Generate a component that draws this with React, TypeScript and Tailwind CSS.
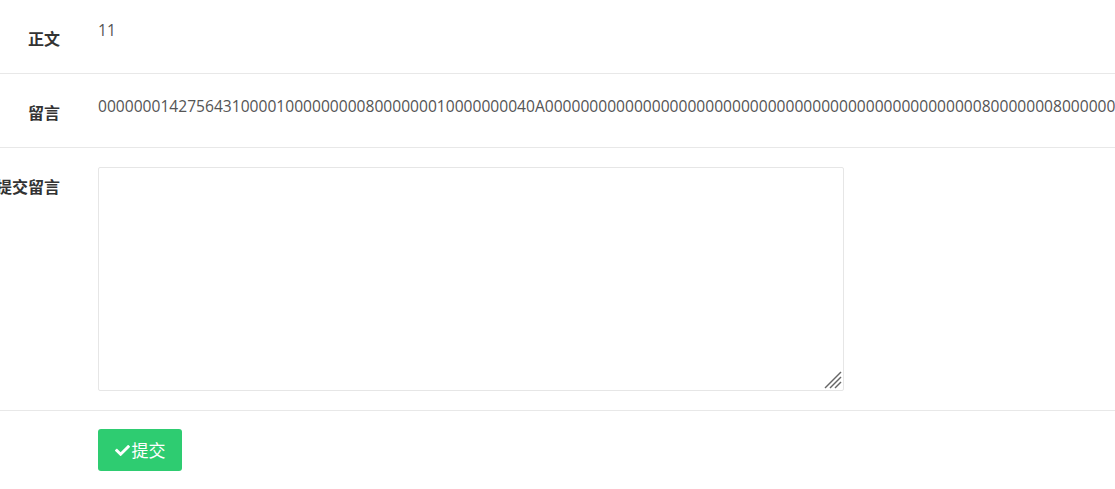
import React from "react";
import { FaCheck } from "react-icons/fa";

const LONG =
  "0000000142756431000010000000008000000010000000040A" +
  "0".repeat(49) +
  "800000008" +
  "0".repeat(40);

function Label({ children }: { children: React.ReactNode }) {
  return (
    <div className="w-[60px] shrink-0 flex justify-end pt-[27px] whitespace-nowrap text-[16px] leading-[22px] font-bold text-[#333] font-['Noto_Sans_CJK_SC',sans-serif]">
      <span>{children}</span>
    </div>
  );
}

export default function App() {
  return (
    <div className="w-[1115px] h-[489px] overflow-hidden bg-white font-['Open_Sans','Noto_Sans_CJK_SC',sans-serif] text-[#555]">
      <div className="flex h-[74px] border-b border-[#e8e8e8]">
        <Label>正文</Label>
        <div className="ml-[38px] pt-[19px] text-[15.6px] leading-[22px]">11</div>
      </div>
      <div className="flex h-[74px] border-b border-[#e8e8e8]">
        <Label>留言</Label>
        <div className="ml-[38px] pt-[21px] text-[15.6px] leading-[22px] whitespace-nowrap">
          {LONG}
        </div>
      </div>
      <div className="flex h-[263px] border-b border-[#e8e8e8]">
        <Label>提交留言</Label>
        <div className="ml-[38px] pt-[19px]">
          <div className="relative w-[746px] h-[224px]">
            <textarea className="block w-full h-full resize-none border border-[#e6e6e6] rounded-[2px] outline-none p-2 text-[14px]" />
            <svg
              className="absolute right-[2px] bottom-[2px] pointer-events-none"
              width="18"
              height="18"
              viewBox="0 0 18 18"
            >
              <g stroke="#666" strokeWidth="1.4">
                <line x1="1" y1="17" x2="17" y2="1" />
                <line x1="6" y1="17" x2="17" y2="6" />
                <line x1="11" y1="17" x2="17" y2="11" />
              </g>
            </svg>
          </div>
        </div>
      </div>
      <div className="flex">
        <div className="w-[60px] shrink-0" />
        <div className="ml-[38px] pt-[18px]">
          <button className="flex items-center justify-center w-[84px] h-[42px] bg-[#2ecc71] rounded-[3px] text-white text-[17px] font-['Noto_Sans_CJK_SC',sans-serif]">
            <FaCheck className="w-[15px] h-[15px] mr-[2px]" />
            <span>提交</span>
          </button>
        </div>
      </div>
    </div>
  );
}
